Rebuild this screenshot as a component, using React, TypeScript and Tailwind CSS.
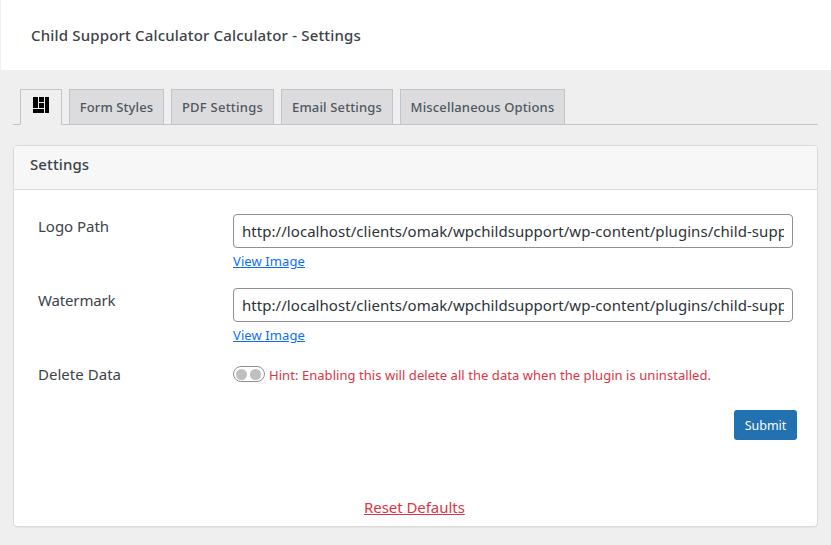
const tabs = [
  { label: "Form Styles", width: "w-[95px]", tracking: "tracking-[0.09px]" },
  { label: "PDF Settings", width: "w-[103px]", tracking: "tracking-[0.24px]" },
  { label: "Email Settings", width: "w-[112px]", tracking: "tracking-[0.14px]" },
  { label: "Miscellaneous Options", width: "w-[165px]", tracking: "tracking-[0.15px]" },
];

const path =
  "http://localhost/clients/omak/wpchildsupport/wp-content/plugins/child-support-calculator/images/logo.png";

function PathField({ label, tracking }: { label: string; tracking: string }) {
  return (
    <div className="flex h-[74px]">
      <div className={`w-[195px] pt-px text-[15px] leading-[22px] ${tracking}`}>{label}</div>
      <div className="w-[560px]">
        <input
          type="text"
          readOnly
          value={path}
          className="block h-[34px] w-full rounded-[4px] border border-[#8c8f94] bg-white px-2 text-[15px] tracking-[0.05px] text-[#2c3338] outline-none"
        />
        <a className="mt-[3px] block w-fit text-[13px] leading-[20px] tracking-[0.1px] text-[#0d6efd] underline">
          View Image
        </a>
      </div>
    </div>
  );
}

export default function App() {
  return (
    <div className="h-[545px] w-[831px] overflow-hidden bg-[#efefef] font-['Noto_Sans',sans-serif] text-[#3c434a]">
      <header className="ml-px flex h-[70px] items-center bg-white pl-[30px]">
        <h1 className="text-[15px] font-medium tracking-[0.17px]">
          Child Support Calculator Calculator - Settings
        </h1>
      </header>

      <nav className="mx-[13px] mt-[19px] flex h-[36px] items-start gap-[7px] border-b border-[#c3c4c7] pl-[7px]">
        <div className="flex h-[36px] w-[42px] justify-center border border-b-[#efefef] border-[#c3c4c7] bg-[#efefef] pt-[7px]">
          <svg width="16" height="16" viewBox="0 0 16 16" shapeRendering="crispEdges" fill="#000">
            <rect x="0" y="0" width="5" height="11" />
            <rect x="6" y="0" width="5" height="5" />
            <rect x="6" y="6" width="5" height="5" />
            <rect x="0" y="12" width="11" height="4" />
            <rect x="12" y="0" width="4" height="16" />
          </svg>
        </div>
        {tabs.map((t) => (
          <div
            key={t.label}
            className={`flex h-[35px] items-center justify-center whitespace-nowrap border border-b-0 border-[#c3c4c7] bg-[#dcdcde] pt-px text-[13px] font-medium text-[#50575e] ${t.width} ${t.tracking}`}
          >
            {t.label}
          </div>
        ))}
      </nav>

      <main className="mx-[13px] mt-[20px] flex h-[382px] flex-col rounded-[4px] border border-[#dadada] bg-white shadow-[0_1px_1px_rgba(0,0,0,0.04)]">
        <div className="h-[44px] rounded-t-[3px] border-b border-[#dadada] bg-[#f7f7f7] pl-4 pt-[6px] text-[15px] font-medium leading-[24px] tracking-[0.1px]">
          Settings
        </div>
        <div className="flex flex-col pl-[24px] pt-[24px]">
          <PathField label="Logo Path" tracking="tracking-[-0.03px]" />
          <PathField label="Watermark" tracking="tracking-[-0.15px]" />
          <div className="flex h-[48px]">
            <div className="w-[195px] pt-px text-[15px] leading-[22px] tracking-[0.03px]">
              Delete Data
            </div>
            <div className="flex h-[24px] items-center">
              <div className="mr-[4px] flex h-4 w-8 items-center gap-[3px] rounded-full border border-[#8c8f94] bg-white pl-[1.5px]">
                <span className="size-[11px] rounded-full bg-[#bfbfbf]" />
                <span className="size-[11px] rounded-full bg-[#bfbfbf]" />
              </div>
              <span className="whitespace-nowrap pt-[2px] text-[13px] leading-[20px] tracking-[0.05px] text-[#dc3545]">
                Hint: Enabling this will delete all the data when the plugin is uninstalled.
              </span>
            </div>
          </div>
        </div>
        <div className="flex justify-end pr-[20px]">
          <button className="h-[30px] w-[63px] rounded-[3px] bg-[#2271b1] pt-px text-[12.5px] leading-[29px] text-white">
            Submit
          </button>
        </div>
        <a className="ml-[350px] mt-[56px] w-fit text-[15px] leading-[22px] tracking-[-0.05px] text-[#dc3545] underline">
          Reset Defaults
        </a>
      </main>
    </div>
  );
}
